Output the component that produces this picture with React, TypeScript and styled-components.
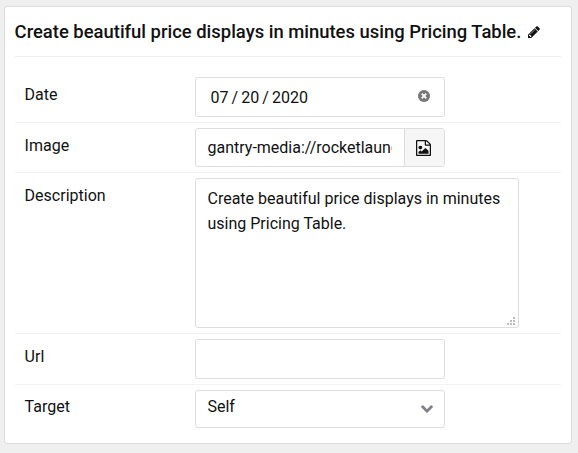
import React from 'react';
import styled, { createGlobalStyle } from 'styled-components';

const GlobalStyle = createGlobalStyle`
  *, *::before, *::after { box-sizing: border-box; }
  body {
    margin: 0;
    background: #efefef;
    color: #111;
    font: 400 16px/25px Roboto, sans-serif;
  }
`;

const Page = styled.main`
  padding: 6px 6px 9px 4px;
`;

const Card = styled.section`
  height: 438px;
  padding: 0 10px;
  background: #fff;
  border: 1px solid #ddd;
  border-radius: 3px;
`;

const Title = styled.h4`
  display: flex;
  align-items: center;
  height: 50px;
  margin: 0 0 15px;
  border-bottom: 1px solid #eee;
  font-size: 18.43px;
  font-weight: 500;
  white-space: nowrap;
`;

const TitleText = styled.span`
  margin-left: -0.4px;
`;

const PencilIcon = styled.svg`
  width: 12px;
  height: 12px;
  margin: 1px 0 0 7px;
  fill: currentColor;
`;

const Row = styled.div`
  display: flex;
  align-items: flex-start;
  padding: 5px 10px 5px 9.6px;

  & + & { border-top: 1px solid #f3f3f3; }
`;

const Label = styled.label<{ $top?: number }>`
  width: 170.4px;
  padding-top: ${({ $top = 5 }) => $top}px;
`;

const Control = styled.div<{ $height?: number }>`
  display: flex;
  align-items: center;
  width: 250px;
  height: ${({ $height = 40 }) => $height}px;
  border: 1px solid #ddd;
  border-radius: 3px;
  background: #fff;
`;

const DateValue = styled.span`
  flex: 1;
  padding-left: 14.5px;
  word-spacing: -0.9px;
`;

const ClearIcon = styled.svg`
  width: 12px;
  height: 12px;
  margin: -2px 14px 0 0;
`;

const PathInput = styled.input`
  width: 208px;
  height: 100%;
  padding: 0 12px 0 11.5px;
  border: 0;
  outline: 0;
  background: transparent;
  color: inherit;
  font: inherit;
`;

const UrlInput = styled(PathInput)`
  width: 100%;
`;

const PickerButton = styled.button`
  display: flex;
  flex: 1;
  align-items: center;
  justify-content: center;
  height: 100%;
  padding: 1px 2px 0 0;
  border: 0;
  border-left: 1px solid #ddd;
  border-radius: 0 2px 2px 0;
  background: #f6f6f6;
  color: #111;
`;

const FileIcon = styled.svg`
  width: 15px;
  height: 16px;
  fill: currentColor;
`;

const DescriptionBox = styled.div`
  display: flex;
  width: 324px;
  height: 150px;
  border: 1px solid #ddd;
  border-radius: 3px;
`;

const DescriptionInput = styled.textarea`
  flex: 1;
  padding: 7px 0 0 11.5px;
  border: 0;
  outline: 0;
  resize: none;
  overflow: hidden;
  background: transparent;
  color: inherit;
  font: inherit;
`;

const ResizeGrip = styled.svg`
  align-self: flex-end;
  width: 8px;
  height: 8px;
  margin: 0 3px 2px 0;
  fill: #bbb;
`;

const SelectValue = styled.span`
  flex: 1;
  padding: 0 0 5px 11.5px;
`;

const ChevronIcon = styled.svg`
  width: 12px;
  height: 8px;
  margin: -1px 11px 0 0;
  fill: #808088;
`;

const gripDots = [[6, 0], [3, 3], [6, 3], [0, 6], [3, 6], [6, 6]];

export default function App() {
  return (
    <Page>
      <GlobalStyle />
      <Card>
        <Title>
          <TitleText>Create beautiful price displays in minutes using Pricing Table.</TitleText>
          <PencilIcon viewBox="0 128 1536 1536">
            <path d="M363 1536l91-91-235-235-91 91v107h128v128h107zM886 608q0-22-22-22-10 0-17 7l-542 542q-7 7-7 17 0 22 22 22 10 0 17-7l542-542q7-7 7-17zM832 416l416 416-832 832H0v-416zM1515 512q0 53-37 90l-166 166-416-416 166-165q36-38 90-38 53 0 91 38l235 234q37 39 37 91z" />
          </PencilIcon>
        </Title>
        <Row>
          <Label>Date</Label>
          <Control>
            <DateValue>07 / 20 / 2020</DateValue>
            <ClearIcon viewBox="0 0 12 12">
              <circle cx="6" cy="6" r="6" fill="#777" />
              <path d="M3.7 3.7l4.6 4.6M8.3 3.7L3.7 8.3" stroke="#fff" strokeWidth="1.7" />
            </ClearIcon>
          </Control>
        </Row>
        <Row>
          <Label htmlFor="image">Image</Label>
          <Control $height={39}>
            <PathInput id="image" defaultValue="gantry-media://rocketlauncher" />
            <PickerButton type="button" aria-label="Choose image">
              <FileIcon viewBox="0 0 1536 1792" preserveAspectRatio="none">
                <path d="M1468 380q28 28 48 76t20 88v1152q0 40-28 68t-68 28H96q-40 0-68-28t-28-68V96q0-40 28-68T96 0h896q40 0 88 20t76 48zM1024 136v376h376q-10-29-22-41l-313-313q-12-12-41-22zM1408 1664V640H992q-40 0-68-28t-28-68V128H128v1536h1280zM1280 1216v320H256v-192l192-192 128 128 384-384zM448 1024q-80 0-136-56t-56-136 56-136 136-56 136 56 56 136-56 136-136 56z" />
              </FileIcon>
            </PickerButton>
          </Control>
        </Row>
        <Row>
          <Label htmlFor="description">Description</Label>
          <DescriptionBox>
            <DescriptionInput
              id="description"
              spellCheck={false}
              defaultValue="Create beautiful price displays in minutes using Pricing Table."
            />
            <ResizeGrip viewBox="0 0 8 8">
              {gripDots.map(([x, y]) => (
                <rect key={`${x}-${y}`} x={x} y={y} width="2" height="2" />
              ))}
            </ResizeGrip>
          </DescriptionBox>
        </Row>
        <Row>
          <Label htmlFor="url">Url</Label>
          <Control>
            <UrlInput id="url" />
          </Control>
        </Row>
        <Row>
          <Label $top={4}>Target</Label>
          <Control $height={38}>
            <SelectValue>Self</SelectValue>
            <ChevronIcon viewBox="90 533 1612 1035">
              <path d="M1683 808l-742 741q-19 19-45 19t-45-19L109 808q-19-19-19-45.5t19-45.5l166-165q19-19 45-19t45 19l531 531 531-531q19-19 45-19t45 19l166 165q19 19 19 45.5t-19 45.5z" />
            </ChevronIcon>
          </Control>
        </Row>
      </Card>
    </Page>
  );
}
